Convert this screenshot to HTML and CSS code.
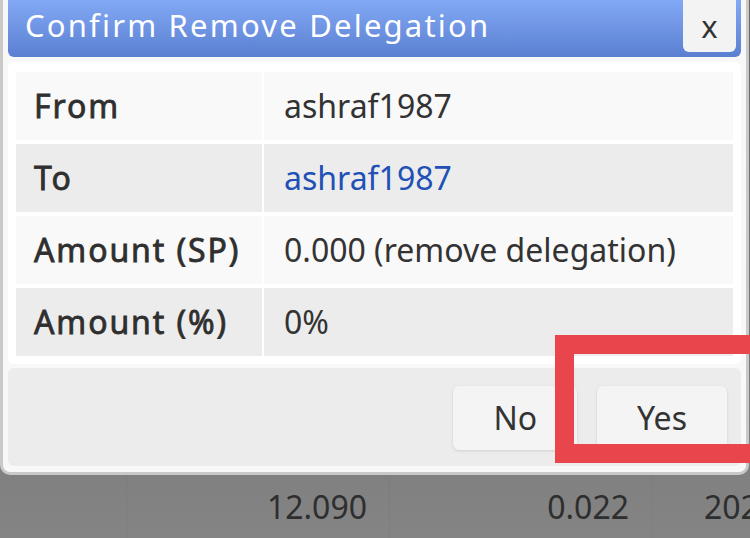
FILE: index.html
```html
<!DOCTYPE html>
<html lang="en">
<head>
    <meta charset="UTF-8">
    <meta name="viewport" content="width=device-width, initial-scale=1.0">
    <title>Delegations</title>
    <link rel="stylesheet" href="styles.css">
</head>
<body>
    <div class="screen">
        <div class="dialog">
            <div class="dialog-header">
                <h2>Confirm Remove Delegation</h2>
                <button class="close-btn">x</button>
            </div>

            <div class="dialog-body">
                <div class="details">
                    <div class="row">
                        <div class="label">From</div>
                        <div class="value">ashraf1987</div>
                    </div>
                    <div class="row">
                        <div class="label">To</div>
                        <div class="value"><a href="#">ashraf1987</a></div>
                    </div>
                    <div class="row">
                        <div class="label">Amount (SP)</div>
                        <div class="value">0.000 (remove delegation)</div>
                    </div>
                    <div class="row">
                        <div class="label">Amount (%)</div>
                        <div class="value">0%</div>
                    </div>
                </div>
            </div>

            <div class="dialog-footer">
                <button class="btn">No</button>
                <button class="btn">Yes</button>
            </div>
        </div>

        <!-- delegation list behind the dialog -->
        <div class="ledger">
            <div class="cell first"></div>
            <div class="cell num">12.090</div>
            <div class="cell num">0.022</div>
            <div class="cell date">2024-03-18</div>
        </div>

        <div class="highlight"></div>
    </div>
</body>
</html>
```

FILE: styles.css
```css
body {
    margin: 0;
    padding: 0;
    font-family: "Noto Sans", "Open Sans", sans-serif;
    color: #333;
}

.screen {
    position: relative;
    width: 750px;
    height: 538px;
    overflow: hidden;
    background: linear-gradient(#656565, #848484);
}

.dialog {
    box-sizing: border-box;
    width: 749px;
    background: #f8f8f8;
    border: 3px solid #c9c9c9;
    border-top: none;
    border-radius: 0 0 10px 10px;
    padding: 0 5px 6px 5px;
}

.dialog-header {
    display: flex;
    align-items: flex-start;
    justify-content: space-between;
    height: 57px;
    background: linear-gradient(#82a9f5, #5a7fd1);
    border-radius: 0 0 6px 6px;
}

.dialog-header h2 {
    margin: 0;
    padding-left: 17px;
    font-size: 31px;
    font-weight: normal;
    line-height: 51px;
    letter-spacing: 2.2px;
    color: #fff;
}

.close-btn {
    width: 53px;
    height: 52px;
    margin-right: 5px;
    border: none;
    border-radius: 0 0 6px 6px;
    background: #f3f3f3;
    font-family: inherit;
    font-size: 31px;
    line-height: 44px;
    color: #333;
    padding: 0;
}

.dialog-body {
    margin-top: 5px;
    background: #fff;
    border-radius: 6px;
    padding: 10px 8px 8px 8px;
}

.details {
    display: flex;
    flex-direction: column;
    gap: 4px;
}

.row {
    display: grid;
    grid-template-columns: 246px 1fr;
    column-gap: 2px;
    height: 68px;
}

.row:nth-child(odd) .label,
.row:nth-child(odd) .value {
    background: #f9f9f9;
}

.row:nth-child(even) .label,
.row:nth-child(even) .value {
    background: #ececec;
}

.label,
.value {
    font-size: 32px;
    line-height: 68px;
    white-space: nowrap;
}

/* labels: regular face thickened a little, spaced out */
.label {
    padding-left: 18px;
    font-weight: normal;
    letter-spacing: 1.9px;
    color: #2f2f2f;
    -webkit-text-stroke: 0.8px #2f2f2f;
}

.value {
    padding-left: 20px;
    color: #333;
}

.value a {
    color: #2150b6;
    text-decoration: none;
}

.dialog-footer {
    display: flex;
    justify-content: flex-end;
    gap: 20px;
    margin-top: 4px;
    height: 98px;
    box-sizing: border-box;
    padding: 18px 14px 0 0;
    background: #ececec;
    border-radius: 6px;
}

.btn {
    height: 64px;
    padding: 0 40px;
    border: none;
    border-radius: 6px;
    background: #f4f4f4;
    box-shadow: 0 1px 3px rgba(0, 0, 0, 0.12);
    font-family: inherit;
    font-size: 32px;
    line-height: 64px;
    color: #333;
}

.ledger {
    display: flex;
    height: 65px;
}

.cell {
    flex-shrink: 0;
    box-sizing: border-box;
    font-size: 32px;
    line-height: 64px;
    color: #2e2e2e;
    white-space: nowrap;
    border-right: 1px solid rgba(0, 0, 0, 0.03);
}

.cell.first {
    width: 127px;
}

.cell.num {
    width: 263px;
    text-align: right;
    padding-right: 22px;
}

.cell.num:nth-child(3) {
    width: 262px;
}

.cell.date {
    flex: 1 1 auto;
    min-width: 0;
    overflow: hidden;
    padding-left: 52px;
    border-right: none;
}

/* red marker drawn over the Yes button */
.highlight {
    position: absolute;
    left: 555px;
    top: 335px;
    width: 230px;
    height: 128px;
    box-sizing: border-box;
    border: 19px solid #e8464c;
}
```
